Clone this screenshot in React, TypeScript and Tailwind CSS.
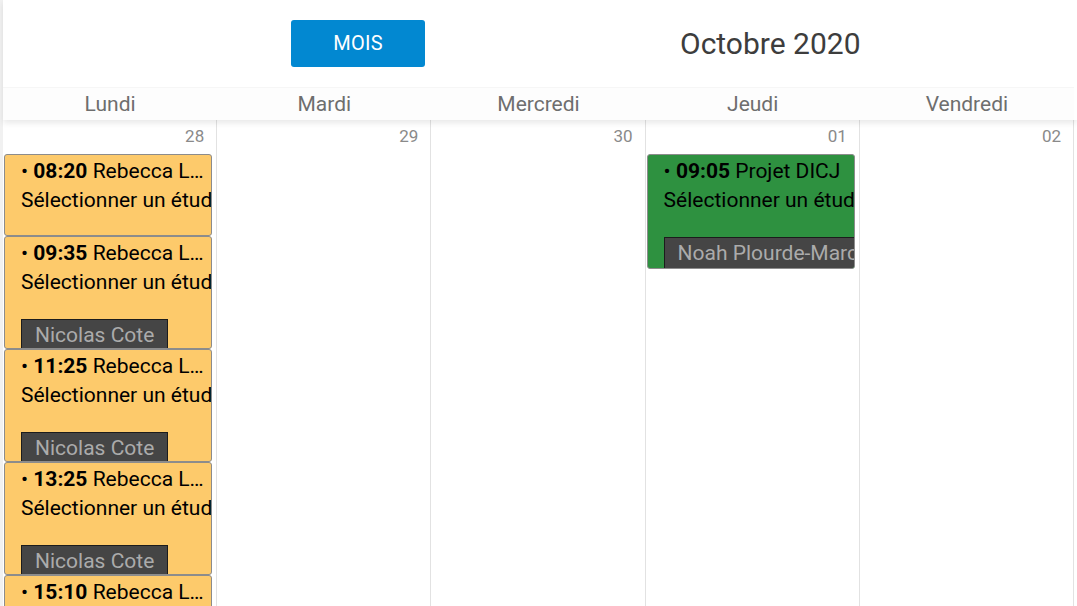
import React from "react";

type Ev = { time: string; title: string; badge?: string; color: "yellow" | "green"; h: string };

const lundi: Ev[] = [
  { time: "08:20", title: "Rebecca L…", color: "yellow", h: "h-[82px]" },
  { time: "09:35", title: "Rebecca L…", badge: "Nicolas Cote", color: "yellow", h: "h-[113px]" },
  { time: "11:25", title: "Rebecca L…", badge: "Nicolas Cote", color: "yellow", h: "h-[113px]" },
  { time: "13:25", title: "Rebecca L…", badge: "Nicolas Cote", color: "yellow", h: "h-[113px]" },
  { time: "15:10", title: "Rebecca L…", badge: "Nicolas Cote", color: "yellow", h: "h-[113px]" },
];

const jeudi: Ev[] = [
  { time: "09:05", title: "Projet DICJ", badge: "Noah Plourde-Marcotte", color: "green", h: "h-[115px]" },
];

function Card({ ev }: { ev: Ev }) {
  return (
    <div
      className={`${ev.h} shrink-0 ml-[1px] mr-[4px] overflow-hidden rounded-[3px] border border-[#8c8c8c] pl-[16px] pt-[2px] text-[21px] leading-[29px] text-black ${
        ev.color === "yellow" ? "bg-[#fdca6b]" : "bg-[#2e9140]"
      }`}
    >
      <div className="whitespace-nowrap overflow-hidden">
        • <span className="font-bold">{ev.time}</span> {ev.title}
      </div>
      <div className="whitespace-nowrap">Sélectionner un étudiant</div>
      {ev.badge && (
        <div className="mt-[22px] inline-block whitespace-nowrap border border-[#1c1c1c] bg-[#454545] px-[13px] text-[21px] leading-[30px] text-[#ababab]">
          {ev.badge}
        </div>
      )}
    </div>
  );
}

const days = [
  { name: "Lundi", num: "28", events: lundi },
  { name: "Mardi", num: "29", events: [] as Ev[] },
  { name: "Mercredi", num: "30", events: [] as Ev[] },
  { name: "Jeudi", num: "01", events: jeudi },
  { name: "Vendredi", num: "02", events: [] as Ev[] },
];

export default function App() {
  return (
    <div
      className="flex h-[606px] w-[1077px] overflow-hidden bg-white"
      style={{ fontFamily: "Roboto, 'Noto Sans', sans-serif" }}
    >
      <div className="w-[3px] shrink-0 bg-[#f1f1f1]" />
      <div className="flex min-w-0 flex-1 flex-col">
        <div className="relative z-10 bg-white shadow-[0_3px_6px_rgba(0,0,0,0.09)]">
          <div className="flex h-[87px] items-center">
            <button className="ml-[288px] -mt-[1px] h-[47px] w-[134px] rounded-[3px] bg-[#0288d1] text-[20px] tracking-[0.3px] text-white">
              MOIS
            </button>
            <div className="ml-[255px] text-[30px] text-[#3d3d3d]">Octobre 2020</div>
          </div>
          <div className="grid h-[33px] w-[1071px] grid-cols-5 border-t border-[#f6f6f6] bg-[#fdfdfd]">
            {days.map((d) => (
              <div key={d.name} className="flex items-center justify-center text-[21px] leading-none text-[#6e6e6e]">
                {d.name}
              </div>
            ))}
          </div>
        </div>
        <div className="grid min-h-0 flex-1 w-[1071px] grid-cols-5">
          {days.map((d) => (
            <div key={d.name} className="flex min-w-0 flex-col overflow-hidden border-r border-[#e2e2e2]">
              <div className="flex h-[34px] shrink-0 items-center justify-end pr-[12px] text-[17px] text-[#8a8a8a]">
                {d.num}
              </div>
              {d.events.map((ev, i) => (
                <Card key={i} ev={ev} />
              ))}
            </div>
          ))}
        </div>
      </div>
    </div>
  );
}
